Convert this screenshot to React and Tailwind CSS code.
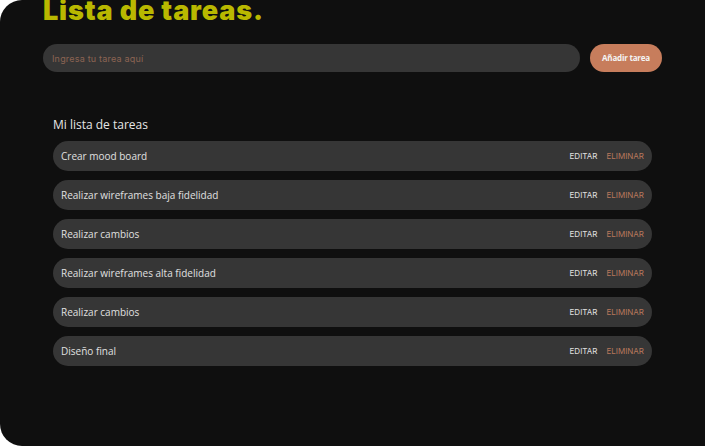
import React from 'react';

const TASKS = [
  'Crear mood board',
  'Realizar wireframes baja fidelidad',
  'Realizar cambios',
  'Realizar wireframes alta fidelidad',
  'Realizar cambios',
  'Diseño final',
];

export default function App() {
  return (
    <div className="w-[705px] h-[446px] bg-white overflow-hidden">
      <div className="h-full bg-[#0f0f0f] rounded-l-[22px] pl-[43px] pr-[43px]">
        <h1 className="text-[27px] leading-[21px] font-black text-[#b9b800] tracking-[0.85px] font-['Inter',sans-serif]">
          Lista de tareas.
        </h1>

        <div className="flex items-center gap-[10px] mt-[23px]">
          <input
            type="text"
            placeholder="Ingresa tu tarea aquí"
            className="w-[537px] h-[28px] rounded-full bg-[#363636] px-[9px] text-[9px] tracking-[0.2px] text-white placeholder:text-[#8c6453] outline-none font-['Inter',sans-serif]"
          />
          <button className="w-[72px] h-[28px] rounded-full bg-[#c77d5c] text-[#f4f4f4] text-[8px] font-bold tracking-[-0.2px] font-['Open_Sans',sans-serif]">
            Añadir tarea
          </button>
        </div>

        <div className="pl-[10px] pr-[10px] mt-[44px]">
          <h2 className="text-[12px] leading-[18px] text-[#e6e6e6] font-['Open_Sans',sans-serif]">
            Mi lista de tareas
          </h2>
          <ul className="mt-[7px] flex flex-col gap-[9px] w-[599px]">
            {TASKS.map((task, i) => (
              <li
                key={i}
                className="h-[30px] rounded-full bg-[#363636] flex items-center justify-between pl-[8px] pr-[8px]"
              >
                <span className="text-[10px] text-[#e0e0e0] font-['Open_Sans',sans-serif]">{task}</span>
                <div className="flex items-center gap-[9px] text-[8px] font-['Inter',sans-serif]">
                  <button className="uppercase text-[#e0e0e0]">Editar</button>
                  <button className="uppercase text-[#b8785c]">Eliminar</button>
                </div>
              </li>
            ))}
          </ul>
        </div>
      </div>
    </div>
  );
}
